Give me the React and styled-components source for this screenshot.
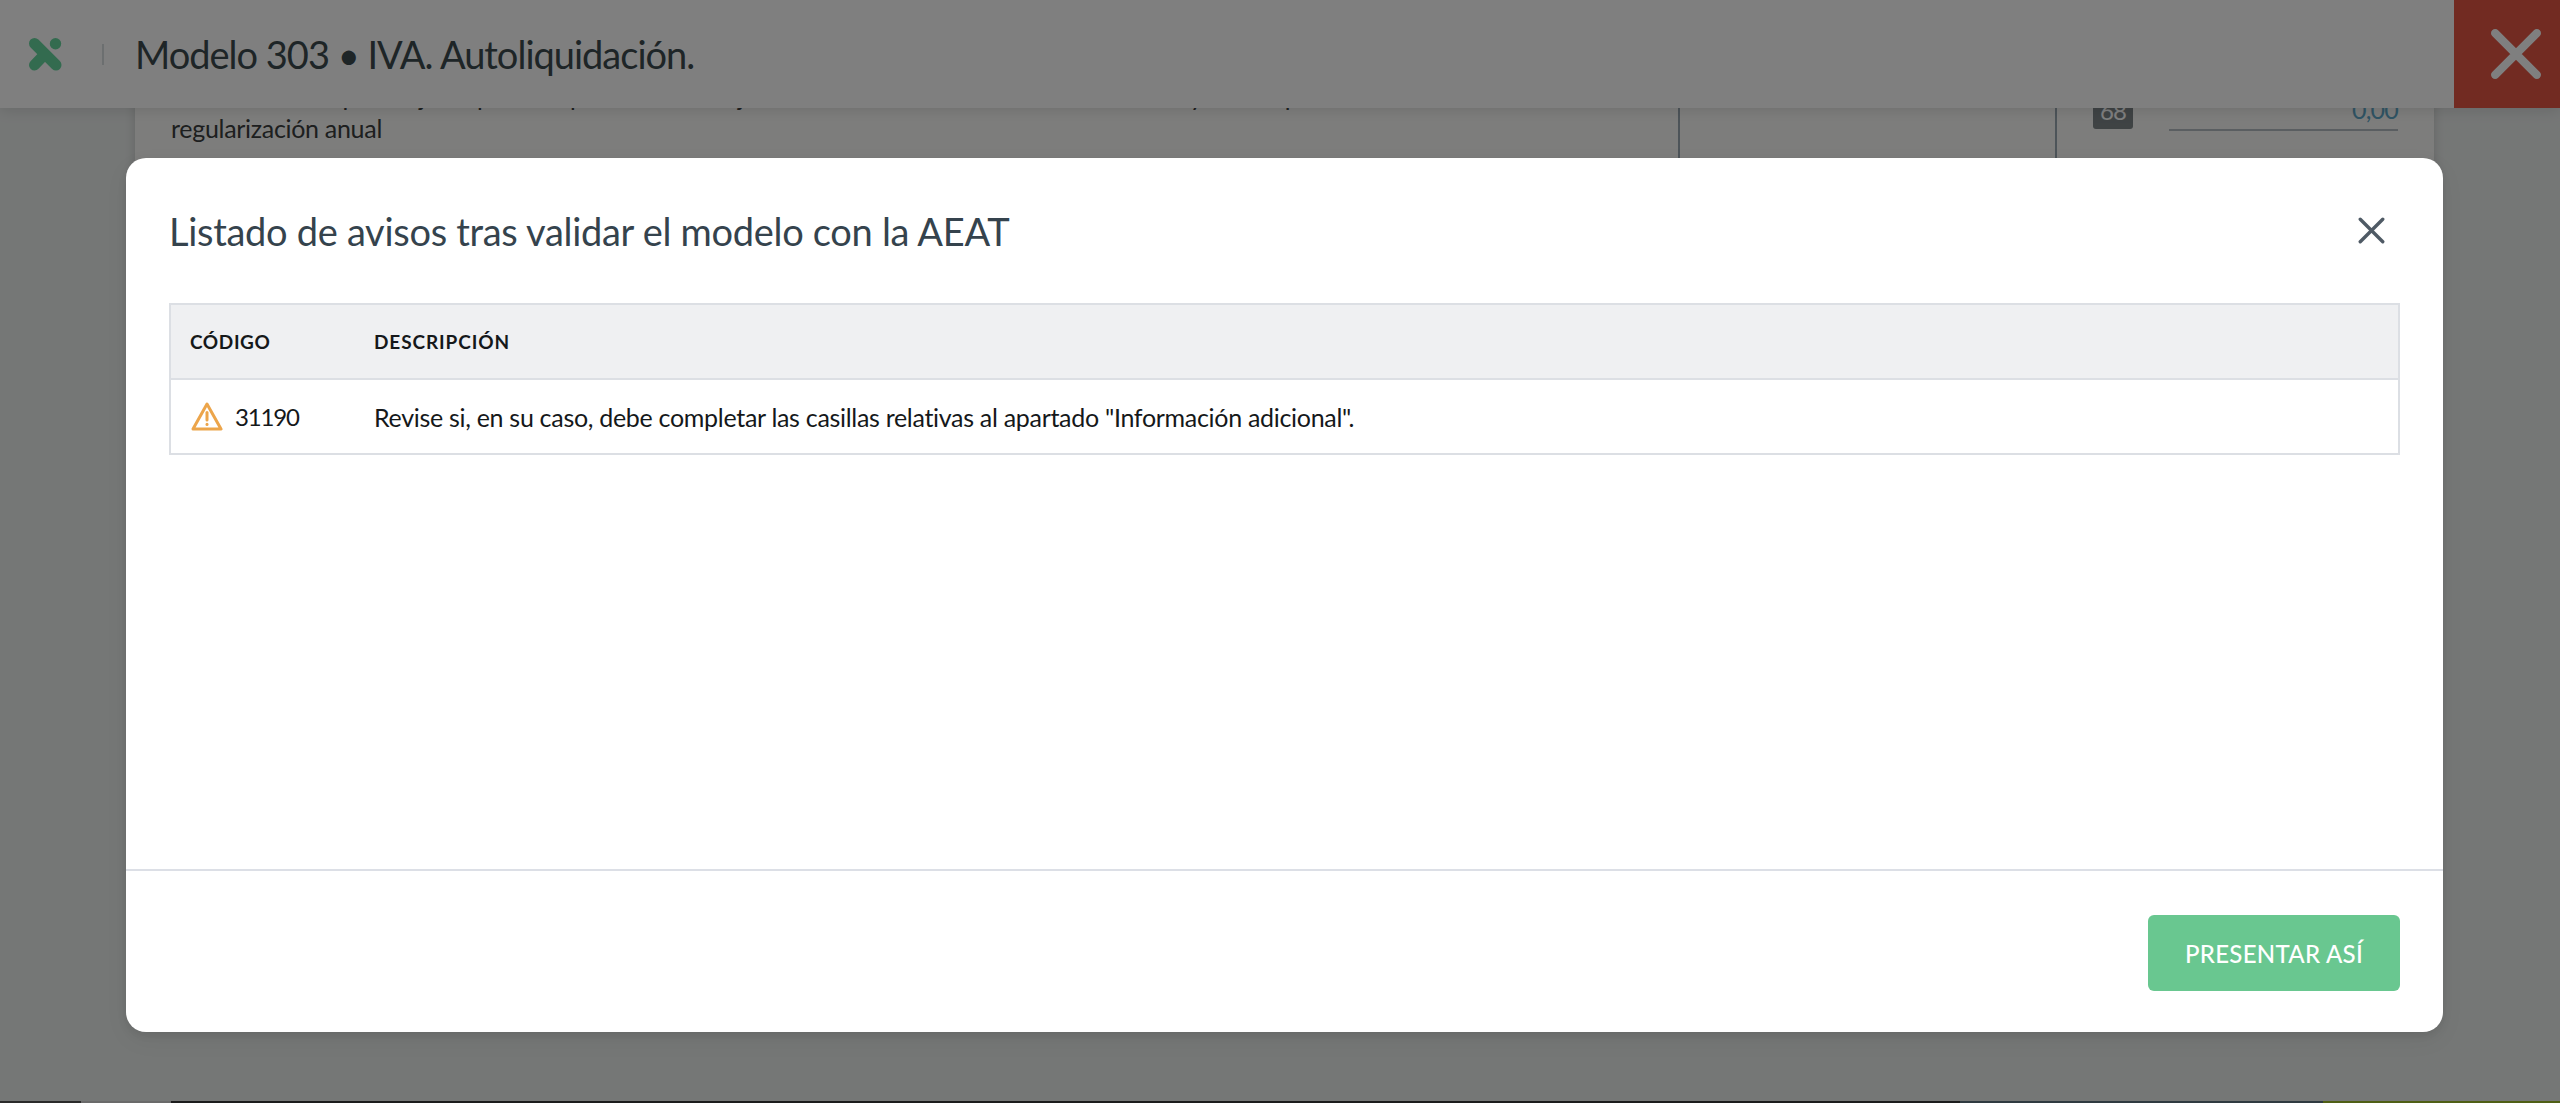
import React from "react";
import styled, { createGlobalStyle } from "styled-components";

const Global = createGlobalStyle`
  html, body { margin: 0; padding: 0; }
  body { font-family: Lato, "Noto Sans", sans-serif; }
`;
const Page = styled.div`
  position: relative; width: 2560px; height: 1103px; overflow: hidden;
  display: flex; flex-direction: column; background: #ebeeed;
`;
const TopBar = styled.header`
  position: relative; z-index: 2; flex: 0 0 108px; display: flex; align-items: center;
  padding-left: 29px; background: #fff; box-shadow: 0 2px 14px rgba(0,0,0,.12);
`;
const Separator = styled.span`
  width: 2px; height: 21px; margin: 0 31px 0 40px; background: #d8dfe0;
`;
const PageTitle = styled.h1`
  flex: 1; margin: 0; font-size: 38px; font-weight: 400; letter-spacing: -1px; color: #3c4a4e;
`;
const ExitButton = styled.button`
  align-self: stretch; width: 106px; padding: 0 0 0 18px; border: 0; background: #e45644; color: #fff;
  display: flex; align-items: center; justify-content: center;
`;
const Workspace = styled.main`
  flex: 1; min-height: 0; overflow: hidden; padding: 0 126px 0 135px;
`;
const Panel = styled.section`
  display: grid; grid-template-columns: 1545px 377px 1fr; height: 800px; margin-top: -60px;
  background: #fbfbf9; box-shadow: 0 0 10px rgba(0,0,0,.16);
`;
const Concept = styled.div`
  padding: 32px 20px 32px 36px; font-size: 25px; line-height: 32px; letter-spacing: -0.3px; color: #3a3e3e;
  border-right: 2px solid #9aa8b2;
`;
const EmptyCell = styled.div`
  border-right: 2px solid #9aa8b2;
`;
const ValueCell = styled.div`
  display: flex; align-items: flex-start; gap: 36px; padding: 41px 36px 0 36px;
`;
const BoxNumber = styled.span`
  width: 40px; height: 40px; border-radius: 3px; background: #7e8689; color: #fff;
  font-size: 24px; line-height: 44px; text-align: center; letter-spacing: -1px;
`;
const ValueField = styled.span`
  flex: 1; height: 40px; border-bottom: 2px solid #b5bcc2; text-align: right;
  font-size: 25px; line-height: 40px; letter-spacing: -0.8px; color: #5fa8c8;
`;
const StatusStrip = styled.footer`
  flex: 0 0 2px; display: flex;
`;
const StripSegment = styled.span`
  flex: 0 0 ${p => p.$w}px; background: ${p => p.$c};
`;
const Backdrop = styled.div`
  position: absolute; inset: 0; z-index: 3; display: flex;
  padding: 158px 117px 71px 126px; background: rgba(0,0,0,.5);
`;
const Modal = styled.div`
  flex: 1; display: flex; flex-direction: column; background: #fff; border-radius: 20px;
  box-shadow: 0 3px 8px rgba(0,0,0,.08), 0 8px 24px rgba(0,0,0,.05);
`;
const ModalHeader = styled.div`
  flex: 0 0 145px; box-sizing: border-box; display: flex; align-items: center; justify-content: space-between;
  padding: 0 58px 0 43px;
`;
const ModalTitle = styled.h2`
  margin: 0; font-size: 38px; font-weight: 400; letter-spacing: -0.3px; color: #35434d;
`;
const IconButton = styled.button`
  display: flex; padding: 0; border: 0; background: none; color: #4f5a65;
`;
const ModalBody = styled.div`
  flex: 1; padding: 0 43px;
`;
const Table = styled.table`
  width: 100%; border-collapse: collapse; table-layout: fixed; border: 2px solid #dcdfe4;
`;
const CodeCol = styled.col`
  width: 204px;
`;
const HeadRow = styled.tr`
  height: 75px; background: #eff0f2; border-bottom: 2px solid #dcdfe4;
`;
const HeadCell = styled.th`
  padding: 0 0 0 19px; text-align: left; font-size: 19px; font-weight: 700;
  letter-spacing: 0.6px; text-transform: uppercase; color: #15181a;
  &:last-child { padding-left: 0; letter-spacing: 0.9px; }
`;
const BodyRow = styled.tr`
  height: 75px;
`;
const CodeCell = styled.td`
  padding: 0 0 0 20px;
`;
const CodeWrap = styled.div`
  display: flex; align-items: center; gap: 12px; font-size: 24px; letter-spacing: -1.2px; color: #15181a;
`;
const TextCell = styled.td`
  padding: 0; font-size: 25px; letter-spacing: -0.3px; color: #15181a;
`;
const ModalFooter = styled.div`
  flex: 0 0 163px; box-sizing: border-box; display: flex; justify-content: flex-end; align-items: flex-start;
  padding: 44px 43px 0; border-top: 2px solid #dcdfe6;
`;
const PrimaryButton = styled.button`
  width: 252px; height: 76px; border: 0; border-radius: 6px; background: #69c790; color: #fff;
  font-family: inherit; font-size: 24px; font-weight: 500; letter-spacing: 0.3px;
`;

const Logo = () => (
  <svg width="33" height="33" viewBox="0 0 33 33" fill="none" stroke="#67d69f" strokeWidth="11" strokeLinecap="round">
    <path d="M5.5 5.5 27 27M16 16 5.5 27" />
    <circle cx="26.5" cy="5.8" r="5.7" fill="#67d69f" stroke="none" />
  </svg>
);
const Cross = ({ size, weight }) => (
  <svg width={size} height={size} viewBox="0 0 48 48" fill="none" stroke="currentColor" strokeWidth={weight} strokeLinecap="round">
    <path d="M4 4 44 44M44 4 4 44" />
  </svg>
);
const Warning = () => (
  <svg width="32" height="29" viewBox="0 0 32 29" fill="none" stroke="#eca54b" strokeWidth="3" strokeLinejoin="round" strokeLinecap="round">
    <path d="M16 2 30 27H2Z" />
    <path d="M16 10.5V18" />
    <path d="M16 22.3V22.5" />
  </svg>
);

const strip = [[81, "#555"], [90, "#d4d4d4"], [1789, "#383838"], [363, "#5e7480"], [237, "#9ebe28"]];

export default function App() {
  return (
    <Page>
      <Global />
      <TopBar>
        <Logo />
        <Separator />
        <PageTitle>Modelo 303 • IVA. Autoliquidación.</PageTitle>
        <ExitButton aria-label="Cerrar"><Cross size={50} weight={8} /></ExitButton>
      </TopBar>
      <Workspace>
        <Panel>
          <Concept>
            Exclusivamente para sujetos pasivos que tributan conjuntamente a la Administración del Estado y a las Diputaciones Forales. Resultado de la<br />
            regularización anual
          </Concept>
          <EmptyCell />
          <ValueCell>
            <BoxNumber>68</BoxNumber>
            <ValueField>0,00</ValueField>
          </ValueCell>
        </Panel>
      </Workspace>
      <StatusStrip>
        {strip.map(([w, c]) => <StripSegment key={c} $w={w} $c={c} />)}
      </StatusStrip>
      <Backdrop>
        <Modal>
          <ModalHeader>
            <ModalTitle>Listado de avisos tras validar el modelo con la AEAT</ModalTitle>
            <IconButton aria-label="Cerrar"><Cross size={27} weight={6} /></IconButton>
          </ModalHeader>
          <ModalBody>
            <Table>
              <colgroup><CodeCol /><col /></colgroup>
              <thead>
                <HeadRow><HeadCell>Código</HeadCell><HeadCell>Descripción</HeadCell></HeadRow>
              </thead>
              <tbody>
                <BodyRow>
                  <CodeCell><CodeWrap><Warning />31190</CodeWrap></CodeCell>
                  <TextCell>Revise si, en su caso, debe completar las casillas relativas al apartado "Información adicional".</TextCell>
                </BodyRow>
              </tbody>
            </Table>
          </ModalBody>
          <ModalFooter><PrimaryButton>PRESENTAR ASÍ</PrimaryButton></ModalFooter>
        </Modal>
      </Backdrop>
    </Page>
  );
}
